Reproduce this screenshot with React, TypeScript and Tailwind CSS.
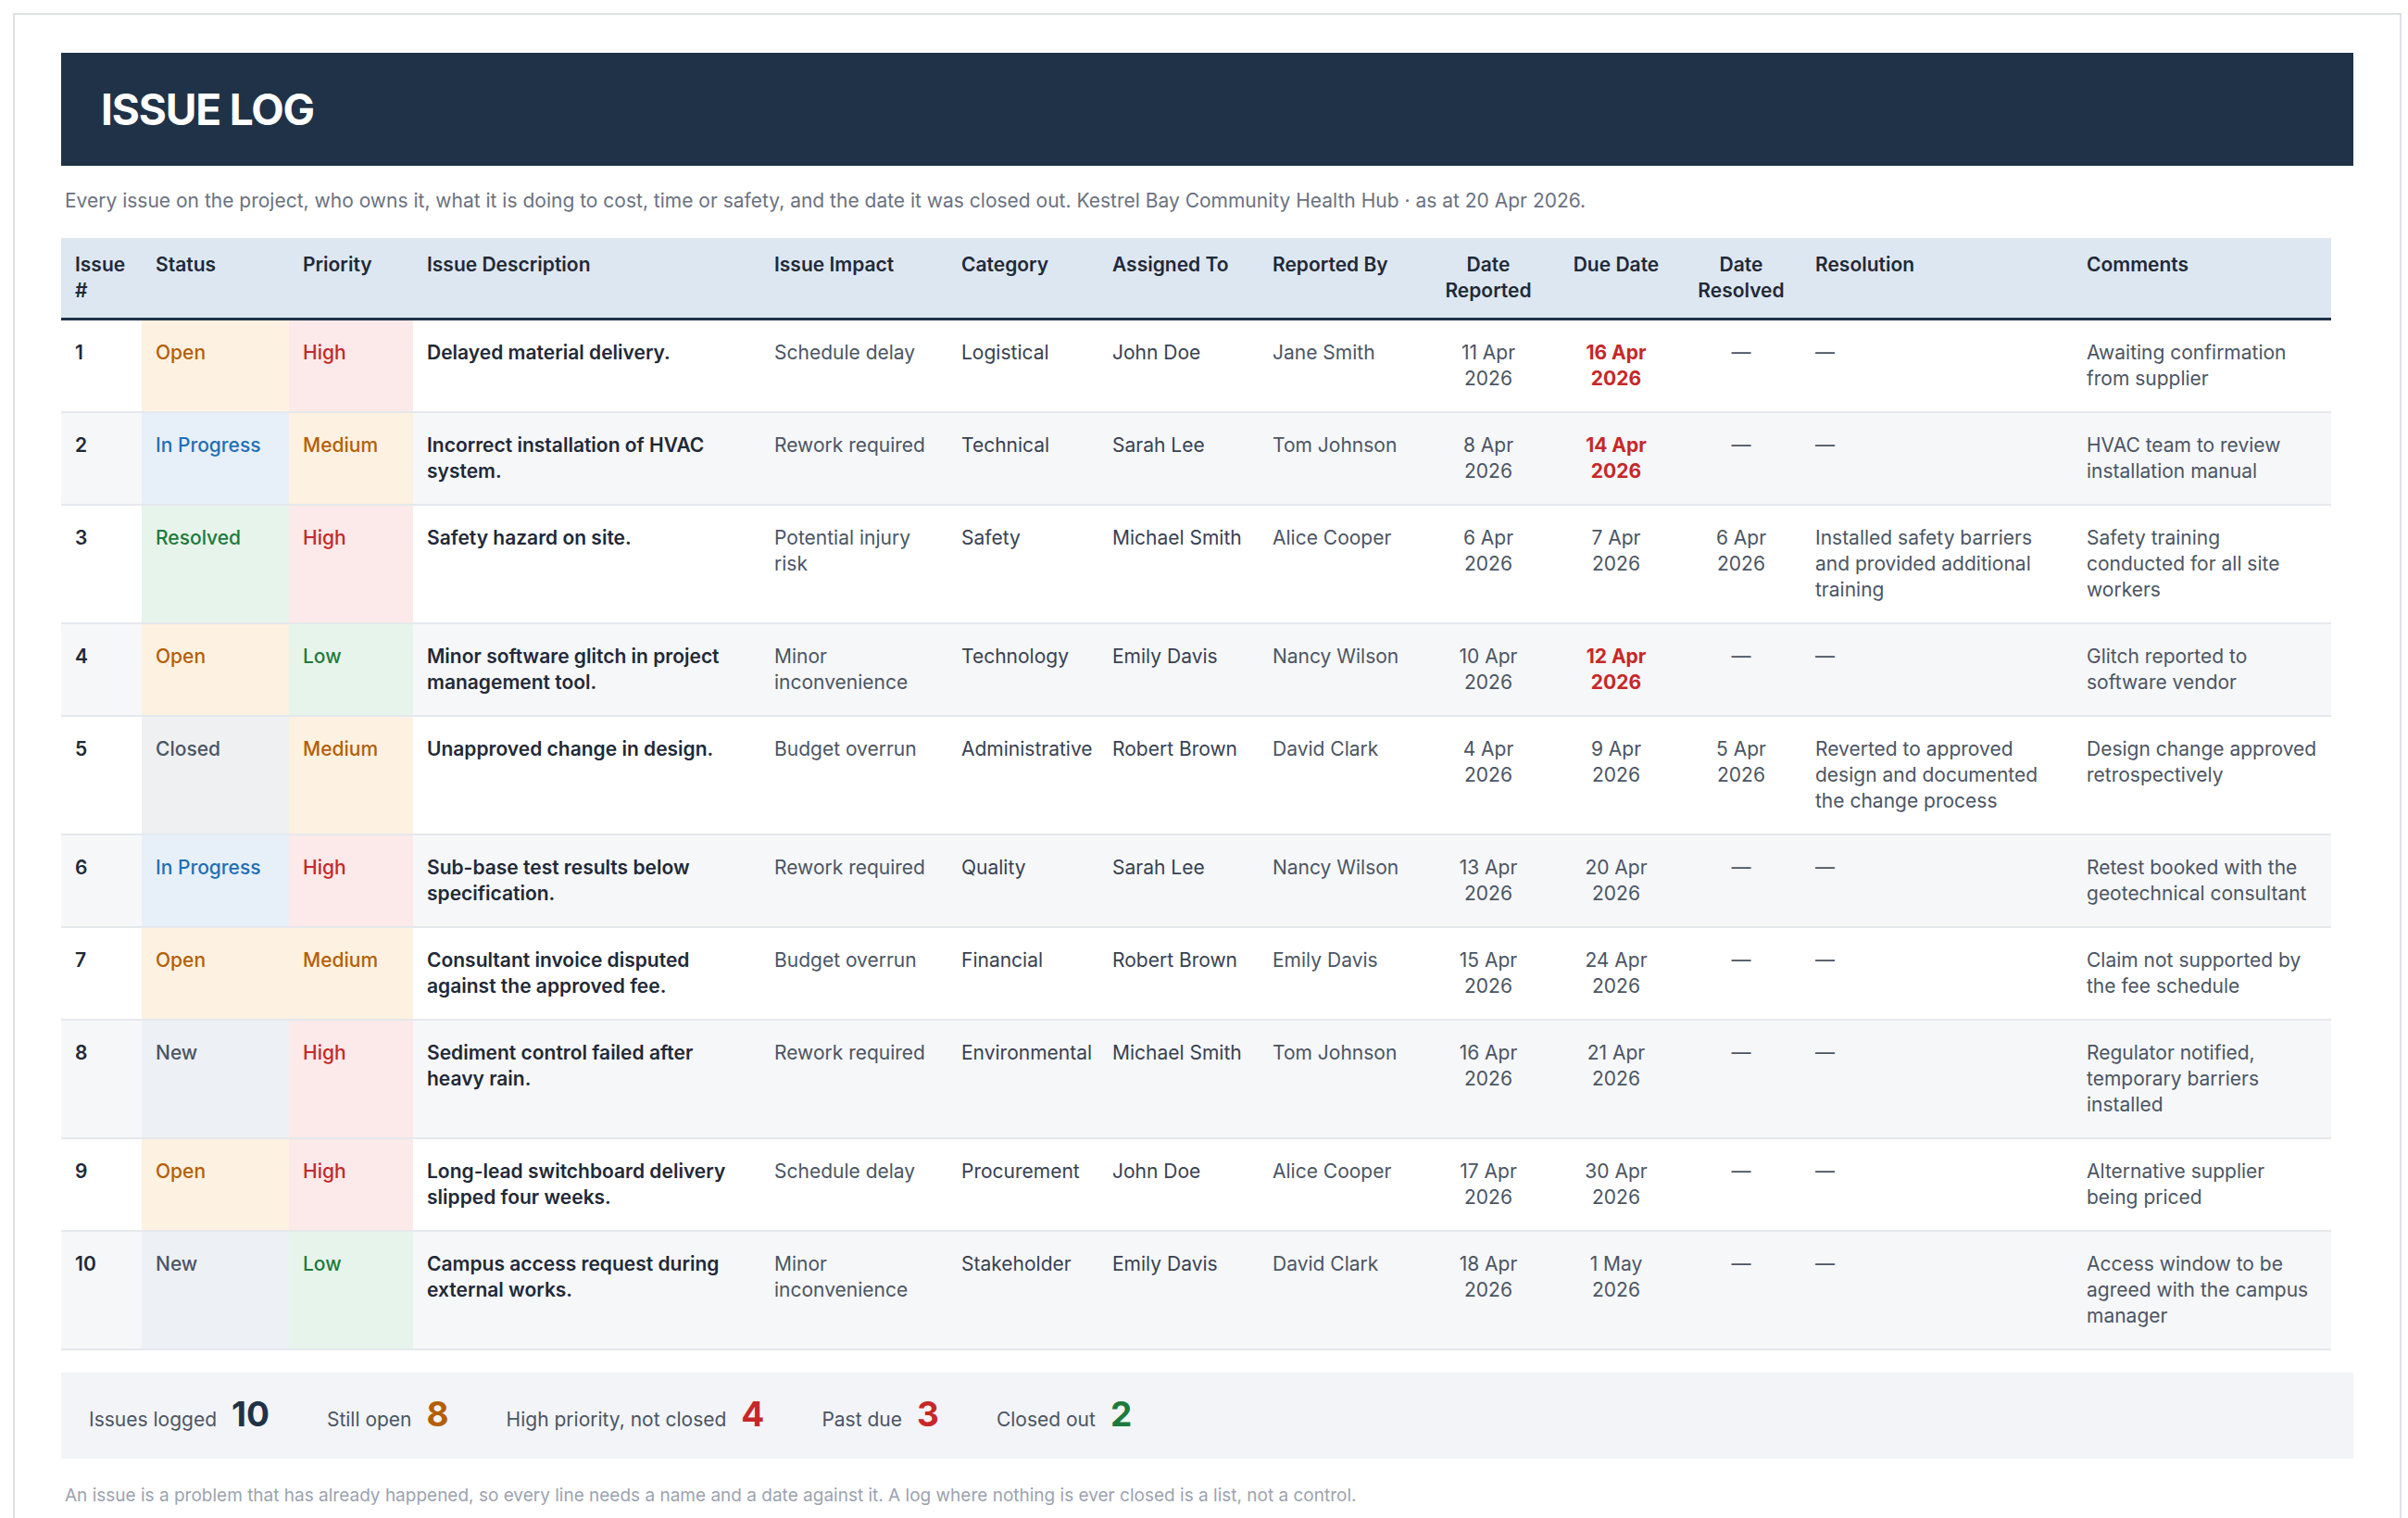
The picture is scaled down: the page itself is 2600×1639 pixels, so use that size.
const statusStyle: Record<string, string> = {
  Open: 'bg-[#fdf1e1] text-[#b45f06]',
  'In Progress': 'bg-[#e7eff8] text-[#1f6fb5]',
  Resolved: 'bg-[#e7f4eb] text-[#1e7a3c]',
  Closed: 'bg-[#eef0f2] text-[#4b5563]',
  New: 'bg-[#edf0f5] text-[#4b5563]',
}
const priorityStyle: Record<string, string> = {
  High: 'bg-[#fce9e9] text-[#c62828]',
  Medium: 'bg-[#fdf1e1] text-[#b45f06]',
  Low: 'bg-[#e7f4eb] text-[#1e7a3c]',
}

type Row = [string, string, string, string, string, string, string, string, string, string, boolean, string, string, string]

const rows: Row[] = [
  ['1', 'Open', 'High', 'Delayed material delivery.', 'Schedule delay', 'Logistical', 'John Doe', 'Jane Smith', '11 Apr 2026', '16 Apr 2026', true, '—', '—', 'Awaiting confirmation from supplier'],
  ['2', 'In Progress', 'Medium', 'Incorrect installation of HVAC system.', 'Rework required', 'Technical', 'Sarah Lee', 'Tom Johnson', '8 Apr 2026', '14 Apr 2026', true, '—', '—', 'HVAC team to review installation manual'],
  ['3', 'Resolved', 'High', 'Safety hazard on site.', 'Potential injury risk', 'Safety', 'Michael Smith', 'Alice Cooper', '6 Apr 2026', '7 Apr 2026', false, '6 Apr 2026', 'Installed safety barriers and provided additional training', 'Safety training conducted for all site workers'],
  ['4', 'Open', 'Low', 'Minor software glitch in project management tool.', 'Minor inconvenience', 'Technology', 'Emily Davis', 'Nancy Wilson', '10 Apr 2026', '12 Apr 2026', true, '—', '—', 'Glitch reported to software vendor'],
  ['5', 'Closed', 'Medium', 'Unapproved change in design.', 'Budget overrun', 'Administrative', 'Robert Brown', 'David Clark', '4 Apr 2026', '9 Apr 2026', false, '5 Apr 2026', 'Reverted to approved design and documented the change process', 'Design change approved retrospectively'],
  ['6', 'In Progress', 'High', 'Sub-base test results below specification.', 'Rework required', 'Quality', 'Sarah Lee', 'Nancy Wilson', '13 Apr 2026', '20 Apr 2026', false, '—', '—', 'Retest booked with the geotechnical consultant'],
  ['7', 'Open', 'Medium', 'Consultant invoice disputed against the approved fee.', 'Budget overrun', 'Financial', 'Robert Brown', 'Emily Davis', '15 Apr 2026', '24 Apr 2026', false, '—', '—', 'Claim not supported by the fee schedule'],
  ['8', 'New', 'High', 'Sediment control failed after heavy rain.', 'Rework required', 'Environmental', 'Michael Smith', 'Tom Johnson', '16 Apr 2026', '21 Apr 2026', false, '—', '—', 'Regulator notified, temporary barriers installed'],
  ['9', 'Open', 'High', 'Long-lead switchboard delivery slipped four weeks.', 'Schedule delay', 'Procurement', 'John Doe', 'Alice Cooper', '17 Apr 2026', '30 Apr 2026', false, '—', '—', 'Alternative supplier being priced'],
  ['10', 'New', 'Low', 'Campus access request during external works.', 'Minor inconvenience', 'Stakeholder', 'Emily Davis', 'David Clark', '18 Apr 2026', '1 May 2026', false, '—', '—', 'Access window to be agreed with the campus manager'],
]

const widths = [87, 159, 134, 375, 202, 163, 173, 180, 136, 140, 130, 293, 279]
const heads = ['Issue #', 'Status', 'Priority', 'Issue Description', 'Issue Impact', 'Category', 'Assigned To', 'Reported By', 'Date Reported', 'Due Date', 'Date Resolved', 'Resolution', 'Comments']
const centered = [8, 9, 10]

function Stat({ label, value, color }: { label: string; value: string; color: string }) {
  return (
    <div className="flex items-baseline gap-[16px]">
      <span className="text-[21px] text-[#4b5563]">{label}</span>
      <span className={`text-[37px] font-bold leading-none ${color}`}>{value}</span>
    </div>
  )
}

export default function App() {
  return (
    <div className="min-h-screen bg-white pt-[14px] px-[14px] pb-[7px]" style={{ fontFamily: 'Inter, "Noto Sans", sans-serif' }}>
      <div className="border-2 border-[#dde1e6] px-[50px] pt-[41px] pb-[18px] mr-[-7px]">
        <div className="bg-[#1f3247] h-[122px] flex items-center px-[43px]">
          <h1 className="text-white text-[46px] font-bold tracking-tight">ISSUE LOG</h1>
        </div>
        <p className="text-[21px] text-[#6b7280] mt-[22px] mb-[24px] px-[4px]">
          Every issue on the project, who owns it, what it is doing to cost, time or safety, and the date it was closed out. Kestrel Bay Community Health Hub · as at 20 Apr 2026.
        </p>
        <table className="table-fixed w-[2451px] border-collapse text-[21px] leading-[28px]">
          <colgroup>
            {widths.map((w, i) => <col key={i} style={{ width: w }} />)}
          </colgroup>
          <thead>
            <tr className="bg-[#dde7f1] border-b-[3px] border-[#1f3247]">
              {heads.map((h, i) => (
                <th key={h} className={`align-top font-semibold text-[#1f2937] py-[15px] px-[15px] ${centered.includes(i) ? 'text-center' : 'text-left'} ${i === 0 ? 'pr-[20px]' : ''}`}>{h}</th>
              ))}
            </tr>
          </thead>
          <tbody>
            {rows.map((r, idx) => (
              <tr key={r[0]} className={`border-b-2 border-[#e5e8ec] ${idx % 2 ? 'bg-[#f6f7f9]' : 'bg-white'}`}>
                <td className="align-top py-[21px] px-[15px] font-semibold text-[#1f2937]">{r[0]}</td>
                <td className={`align-top py-[21px] px-[15px] font-medium ${statusStyle[r[1]]}`}>{r[1]}</td>
                <td className={`align-top py-[21px] px-[15px] font-medium ${priorityStyle[r[2]]}`}>{r[2]}</td>
                <td className="align-top py-[21px] px-[15px] font-semibold text-[#1f2937]">{r[3]}</td>
                <td className="align-top py-[21px] px-[15px] text-[#4b5563]">{r[4]}</td>
                <td className="align-top py-[21px] px-[15px] text-[#374151]">{r[5]}</td>
                <td className="align-top py-[21px] px-[15px] text-[#374151]">{r[6]}</td>
                <td className="align-top py-[21px] px-[15px] text-[#4b5563]">{r[7]}</td>
                <td className="align-top py-[21px] px-[28px] text-center text-[#4b5563]">{r[8]}</td>
                <td className={`align-top py-[21px] px-[28px] text-center ${r[10] ? 'font-bold text-[#c62828]' : 'text-[#4b5563]'}`}>{r[9]}</td>
                <td className="align-top py-[21px] px-[28px] text-center text-[#4b5563]">{r[11]}</td>
                <td className="align-top py-[21px] px-[15px] text-[#4b5563]">{r[12]}</td>
                <td className="align-top py-[21px] px-[15px] text-[#4b5563]">{r[13]}</td>
              </tr>
            ))}
          </tbody>
        </table>
        <div className="mt-[24px] bg-[#f2f4f7] h-[93px] flex items-center gap-[62px] px-[30px]">
          <Stat label="Issues logged" value="10" color="text-[#1f3247]" />
          <Stat label="Still open" value="8" color="text-[#b45f06]" />
          <Stat label="High priority, not closed" value="4" color="text-[#c62828]" />
          <Stat label="Past due" value="3" color="text-[#c62828]" />
          <Stat label="Closed out" value="2" color="text-[#1e7a3c]" />
        </div>
        <p className="text-[19px] text-[#9ca3af] mt-[26px] px-[4px]">
          An issue is a problem that has already happened, so every line needs a name and a date against it. A log where nothing is ever closed is a list, not a control.
        </p>
      </div>
    </div>
  )
}
